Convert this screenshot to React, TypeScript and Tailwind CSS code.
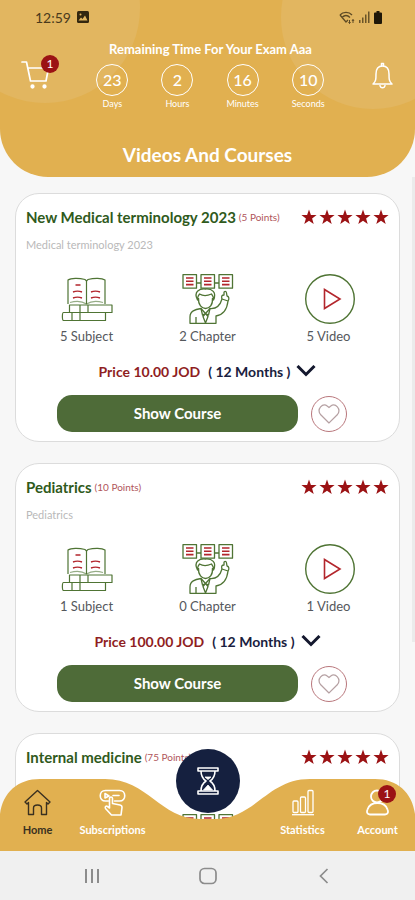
import { Fragment, useState } from 'react';

interface Course {
  id: number;
  title: string;
  points: number;
  description: string;
  subjects: number;
  chapters: number;
  videos: number;
  price: string;
}

const courses: Course[] = [
  { id: 1, title: 'New Medical terminology 2023', points: 5, description: 'Medical terminology 2023', subjects: 5, chapters: 2, videos: 5, price: '10.00' },
  { id: 2, title: 'Pediatrics', points: 10, description: 'Pediatrics', subjects: 1, chapters: 0, videos: 1, price: '100.00' },
  { id: 3, title: 'Internal medicine', points: 75, description: 'Internal medicine', subjects: 1, chapters: 0, videos: 1, price: '75.00' },
];

const countdown = [
  { value: 23, label: 'Days' },
  { value: 2, label: 'Hours' },
  { value: 16, label: 'Minutes' },
  { value: 10, label: 'Seconds' },
];

const GREEN = '#4f7434';
const RED = '#b3262c';

function BooksIcon() {
  return (
    <svg width="52" height="50" viewBox="0 0 52 50" fill="none" stroke={GREEN} strokeWidth="1.2" aria-hidden="true">
      <path d="M7 30V6C10 4 18 4 24 5.500L25.500 7L27 5.500C33 4 41 4 44 6V30" />
      <path d="M9 28.500C14 27 21 27 25.500 30C30 27 37 27 42 28.500" strokeOpacity="0.6" />
      <path d="M25.500 7V30" />
      <path d="M8.500 31H51V38.500H8.500ZM19 31V38.500M27 31V38.500" strokeLinejoin="round" />
      <path d="M2.500 38.500H44.500V46.500H2.500C1 46.500 1 38.500 2.500 38.500ZM11 38.500V46.500M19 38.500V46.500" strokeLinejoin="round" />
      <path d="M14.500 11H19.500M12 18C15 16.800 18 16.800 21 18M12 24C15 22.800 18 22.800 21 24M30 18C33 16.800 36 16.800 39 18M30 24C33 22.800 36 22.800 39 24" stroke={RED} strokeWidth="1.400" />
    </svg>
  );
}

function TeacherIcon() {
  return (
    <svg width="52" height="50" viewBox="0 0 52 50" fill="none" stroke={GREEN} strokeWidth="1.300" strokeLinejoin="round" aria-hidden="true">
      {[1, 19, 37].map((x) => (
        <Fragment key={x}>
          <rect x={x} y="0.700" width="13.500" height="13.500" />
          <path d={`M${x + 3} 4H${x + 10.5}M${x + 3} 7.300H${x + 10.5}M${x + 3} 10.600H${x + 10.5}`} stroke={RED} strokeWidth="1.600" />
        </Fragment>
      ))}
      <path d="M14.500 9H19M32.500 9H37" />
      <path d="M15.500 26C11 17 18 14.500 23.500 15C30 14.500 35 18 31.500 26C31.500 23 30.500 21 29.500 20C25 22 20 21.500 17.500 20C16 21.500 15.500 23 15.500 26Z" />
      <path d="M16.500 24C16 31 20 34.500 23.500 34.500C27.500 34.500 31 31 30.500 24" />
      <path d="M8 49.300V43C8 37 13 35.500 19 34.500L23.500 39.500L28 34.500C34 35 38 32 40 25L46 27C45 36 40 41 34 42V49.300Z" />
      <path d="M14 49V43M23.500 39.500L21 42.500L23.500 49M23.500 39.500L26 42.500L23.500 49M19 34.500L20.500 41L23.500 39.500L26.500 41L28 34.500" />
      <path d="M40 25C39 22 40 21 42 21V18.500C42 17 44.500 17 44.500 19L45 22C47 22.500 47.500 25 46 27" />
    </svg>
  );
}

function VideoIcon() {
  return (
    <svg width="52" height="50" viewBox="0 0 52 50" fill="none" aria-hidden="true">
      <circle cx="27" cy="25" r="24.300" stroke={GREEN} strokeWidth="1.400" />
      <path d="M21.500 15.500V34.500L37 25Z" stroke={RED} strokeWidth="1.600" />
    </svg>
  );
}

function Stars() {
  return (
    <div className="flex gap-[2px]" role="img" aria-label="5 out of 5 stars">
      {[0, 1, 2, 3, 4].map((i) => (
        <svg key={i} width="16" height="16" viewBox="0 0 16 16" fill="#9b1214" aria-hidden="true">
          <path d="M8 0.500L9.900 5.900L15.600 6L11.100 9.500L12.700 15L8 11.700L3.300 15L4.900 9.500L0.400 6L6.100 5.900Z" />
        </svg>
      ))}
    </div>
  );
}

function CourseCard({ course }: { course: Course }) {
  const [liked, setLiked] = useState(false);

  const stats = [
    { icon: <BooksIcon />, text: `${course.subjects} Subject` },
    { icon: <TeacherIcon />, text: `${course.chapters} Chapter` },
    { icon: <VideoIcon />, text: `${course.videos} Video` },
  ];

  return (
    <article className="rounded-[24px] border border-[#dcdcdc] bg-white px-[10px] pt-[11px] pb-[9px]">
      <div className="flex h-6 items-center justify-between">
        <div className="flex items-center gap-[3px] whitespace-nowrap">
          <h2 className="text-[15px] font-bold text-[#2f5a1c]">{course.title}</h2>
          <span className="text-[10px] text-[#b0555a]">({course.points} Points)</span>
        </div>
        <Stars />
      </div>
      <p className="mt-[6px] text-[11px] leading-5 text-[#b9b9b9]">{course.description}</p>

      <div className="mt-[19px] grid grid-cols-3">
        {stats.map((stat) => (
          <div key={stat.text} className="flex flex-col items-center">
            {stat.icon}
            <span className="mt-[2px] text-[13px] leading-5 text-[#55585c]">{stat.text}</span>
          </div>
        ))}
      </div>

      <div className="mt-[13px] flex h-6 items-center justify-center gap-2 text-[14px] font-bold">
        <span className="text-[#8f1d22]">Price {course.price} JOD</span>
        <button type="button" className="flex items-center gap-[6px] text-[#1a2140]">
          ( 12 Months )
          <svg width="20" height="12" viewBox="0 0 20 12" fill="none" stroke="#14182e" strokeWidth="3" aria-hidden="true">
            <path d="M1.500 1L10 9.500L18.500 1" />
          </svg>
        </button>
      </div>

      <div className="mt-3 flex items-center gap-[13px] pr-[42px] pl-[31px]">
        <button type="button" className="h-[37px] flex-1 rounded-[15px] bg-[#4e6b38] text-[15px] font-bold text-white">
          Show Course
        </button>
        <button
          type="button"
          aria-label="Add to favourites"
          aria-pressed={liked}
          onClick={() => setLiked(!liked)}
          className="flex size-9 items-center justify-center rounded-full border border-[#b9777c]"
        >
          <svg width="22" height="20" viewBox="0 0 22 20" fill={liked ? '#9b1214' : 'none'} stroke="#b5a0a2" strokeWidth="1.200" aria-hidden="true">
            <path d="M11 19L2.500 10.500C-1.500 5 4.500 -1.500 9.500 2.200L11 3.500L12.500 2.200C17.500 -1.500 23.500 5 19.500 10.500Z" />
          </svg>
        </button>
      </div>
    </article>
  );
}

function StatusBar() {
  return (
    <div className="flex h-[34px] items-center justify-between pr-[33px] pl-[35px] text-[#4a3a1c]">
      <div className="flex items-center gap-[6px]">
        <span className="text-[14px]">12:59</span>
        <svg width="12" height="12" viewBox="0 0 12 12" aria-hidden="true">
          <rect width="12" height="12" rx="1.500" fill="#33270f" />
          <path d="M1.500 9.500L4 6.500L5.500 8L8 4.500L10.500 9.500Z" fill="#e3b75f" />
          <circle cx="3.500" cy="3.500" r="1" fill="#e3b75f" />
        </svg>
      </div>
      <div className="flex items-center gap-1">
        <svg width="16" height="13" viewBox="0 0 16 13" fill="none" stroke="#5d4a24" strokeWidth="1.300" aria-hidden="true">
          <path d="M1 4C4 0.500 10 0.500 13 4M3 6.500C5.500 4 8.500 4 11 6.500M1 4L7 11L9 9" />
          <path d="M10.500 9V12.500M9.500 11L10.500 12.500L11.500 11M14 12V8.500M13 10L14 8.500L15 10" strokeWidth="1" />
        </svg>
        <svg width="11" height="12" viewBox="0 0 11 12" fill="#6b5528" aria-hidden="true">
          <path d="M0 9H1.500V12H0ZM3 6.500H4.500V12H3ZM6 3.500H7.500V12H6ZM9 0.500H10.500V12H9Z" />
        </svg>
        <svg width="8" height="13" viewBox="0 0 8 13" fill="#1f1708" aria-hidden="true">
          <path d="M2.500 0H5.500V1.500H7Q8 1.500 8 2.500V12Q8 13 7 13H1Q0 13 0 12V2.500Q0 1.500 1 1.500H2.500Z" />
        </svg>
      </div>
    </div>
  );
}

function Header() {
  return (
    <header className="relative z-10 shrink-0 overflow-hidden rounded-b-[48px] bg-[#e1b050] pb-2 text-white">
      <div className="absolute -top-[87px] -left-[50px] size-[190px] rounded-full bg-[#e2b660]" />
      <div className="absolute -top-[75px] -right-[50px] size-[184px] rounded-full bg-[#e2b660]" />
      <div className="relative">
        <StatusBar />
        <div className="flex items-start justify-between pr-[22px] pl-[21px]">
          <button type="button" aria-label="Cart, 1 item" className="relative mt-[27px]">
            <svg width="28" height="28" viewBox="0 0 28 28" fill="none" stroke="white" strokeWidth="1.700" strokeLinecap="round" strokeLinejoin="round" aria-hidden="true">
              <path d="M1 1H5.500L9.500 20H25L27.500 7H7" />
              <circle cx="11.500" cy="25.500" r="1.300" fill="white" />
              <circle cx="23.500" cy="25.500" r="1.300" fill="white" />
            </svg>
            <span className="absolute -top-[6px] left-5 flex size-[18px] items-center justify-center rounded-full bg-[#9b1214] text-[12px]">1</span>
          </button>

          <div className="flex flex-col items-center">
            <p className="mt-[5px] text-[13px] leading-5 font-bold">Remaining Time For Your Exam Aaa</p>
            <div className="mt-[5px] flex gap-[33px]">
              {countdown.map((item) => (
                <div key={item.label} className="flex flex-col items-center">
                  <div className="flex size-8 items-center justify-center rounded-full border border-white text-[16px] font-medium">
                    {item.value}
                  </div>
                  <span className="text-[9px] leading-4">{item.label}</span>
                </div>
              ))}
            </div>
          </div>

          <button type="button" aria-label="Notifications" className="mt-7">
            <svg width="21" height="27" viewBox="0 0 21 27" fill="none" stroke="white" strokeWidth="1.500" strokeLinecap="round" strokeLinejoin="round" aria-hidden="true">
              <path d="M1 22C4 19.500 4 17 4 12C4 6.500 7 4 10.500 4C14 4 17 6.500 17 12C17 17 17 19.500 20 22Z" />
              <path d="M9.500 4V1.500H11.500V4M8 23.500C8.500 26.500 12.500 26.500 13 23.500" />
            </svg>
          </button>
        </div>
        <h1 className="mt-[29px] text-center text-[19px] leading-7 font-bold">Videos And Courses</h1>
      </div>
    </header>
  );
}

function BottomNav() {
  return (
    <nav className="absolute inset-x-0 bottom-0 h-[73px]">
      <svg className="absolute inset-0 h-full w-full" viewBox="0 0 415 73" preserveAspectRatio="none" fill="#e1b050" aria-hidden="true">
        <path d="M0 36C3 14 18 1 40 1H105C148 1 160 41 200 41H215C255 41 267 1 310 1H375C397 1 412 14 415 36V73H0Z" />
      </svg>
      <div className="relative grid h-full grid-cols-[75fr_75fr_115fr_75fr_75fr] text-[11px] leading-4 font-bold text-white">
        <a href="#home" className="flex flex-col items-center gap-[6px] pt-[11px] text-[#3a3020]">
          <svg width="27" height="27" viewBox="0 0 27 27" fill="none" stroke="currentColor" strokeWidth="1.400" strokeLinejoin="round" aria-hidden="true">
            <path d="M1 13L13.500 1.500L26 13L24 15L22.500 13.500V25.500H17.500V19C17.500 15 9.500 15 9.500 19V25.500H4.500V13.500L3 15Z" />
          </svg>
          Home
        </a>
        <a href="#subscriptions" className="flex flex-col items-center gap-[6px] pt-[11px]">
          <svg width="27" height="27" viewBox="0 0 27 27" fill="none" stroke="currentColor" strokeWidth="1.600" strokeLinejoin="round" strokeLinecap="round" aria-hidden="true">
            <path d="M9.500 12H6.500C-0.500 12 -0.500 1.500 6.500 1.500H20.500C27.500 1.500 27.500 12 20.500 12H15.500" />
            <path d="M6 4.500L10 7L6 9ZM14 6.500H20" />
            <path d="M10.500 19V9.500C10.500 7.500 13.500 7.500 13.500 9.500V14.500L21 16C22.500 16.300 23 17 23 18.500L22 26H12.500L6.500 19.500C5.500 17.500 7.500 16.500 8.500 17.500Z" />
          </svg>
          Subscriptions
        </a>
        <div />
        <a href="#statistics" className="flex flex-col items-center gap-[6px] pt-[11px]">
          <svg width="24" height="27" viewBox="0 0 24 27" fill="none" stroke="currentColor" strokeWidth="1.300" strokeLinejoin="round" aria-hidden="true">
            <rect x="2" y="12" width="5" height="11.500" rx="1" />
            <rect x="9.500" y="8" width="5" height="15.500" rx="1" />
            <rect x="17" y="1.500" width="5" height="22" rx="1" />
            <path d="M1 25.700H23" />
          </svg>
          Statistics
        </a>
        <a href="#account" className="flex flex-col items-center gap-[6px] pt-[11px]">
          <span className="relative">
            <svg width="23" height="27" viewBox="0 0 23 27" fill="none" stroke="currentColor" strokeWidth="1.800" aria-hidden="true">
              <circle cx="11" cy="7.500" r="6" />
              <path d="M4 25.500C1 25.500 0.500 23 1.500 20.500C3 16 7 14 11.500 14C16 14 20 16 21.500 20.500C22.500 23 22 25.500 19 25.500Z" strokeLinejoin="round" />
            </svg>
            <span className="absolute -top-[4px] left-3 flex size-[18px] items-center justify-center rounded-full bg-[#9b1214] text-[12px] font-normal">1</span>
          </span>
          Account
        </a>
      </div>
      <button
        type="button"
        aria-label="Exam timer"
        className="absolute -top-[29px] left-1/2 flex size-16 -translate-x-1/2 items-center justify-center rounded-full bg-[#15203f]"
      >
        <svg width="22" height="28" viewBox="0 0 22 28" fill="none" stroke="white" strokeWidth="1.600" strokeLinejoin="round" aria-hidden="true">
          <path d="M1 1H21V4H1ZM1 24H21V27H1Z" />
          <path d="M4 4C4 10 6 12 9 14C6 16 4 18 4 24M18 4C18 10 16 12 13 14C16 16 18 18 18 24" />
          <path d="M8 10H14L11 12.500ZM6.500 23L11 18L15.500 23Z" fill="white" strokeWidth="0.800" />
        </svg>
      </button>
    </nav>
  );
}

function SystemBar() {
  return (
    <div className="flex h-[49px] shrink-0 items-center justify-center gap-[98px] bg-[#f0f0f0] text-[#8c8c8c]">
      <button type="button" aria-label="Recent apps">
        <svg width="18" height="18" viewBox="0 0 18 18" fill="none" stroke="currentColor" strokeWidth="2" aria-hidden="true">
          <path d="M3 2V16M9 2V16M15 2V16" />
        </svg>
      </button>
      <button type="button" aria-label="Home screen">
        <svg width="18" height="18" viewBox="0 0 18 18" fill="none" stroke="currentColor" strokeWidth="1.700" aria-hidden="true">
          <rect x="1" y="1.500" width="16" height="15" rx="4.500" />
        </svg>
      </button>
      <button type="button" aria-label="Back">
        <svg width="18" height="18" viewBox="0 0 18 18" fill="none" stroke="currentColor" strokeWidth="1.700" aria-hidden="true">
          <path d="M12.500 2L5.500 9L12.500 16" />
        </svg>
      </button>
    </div>
  );
}

export default function App() {
  return (
    <div className="flex h-screen flex-col bg-[#f7f7f7] font-['Lato','Noto_Sans',sans-serif]">
      <Header />
      <div className="relative min-h-0 flex-1">
        <main className="flex h-full flex-col gap-[21px] overflow-y-auto px-[15px] pt-4 [scrollbar-width:none]">
          {courses.map((course) => (
            <div key={course.id} className="shrink-0">
              <CourseCard course={course} />
            </div>
          ))}
        </main>
        <div className="absolute top-0 right-0 h-[69%] w-[3px] bg-[#ebebeb]" />
        <BottomNav />
      </div>
      <SystemBar />
    </div>
  );
}
